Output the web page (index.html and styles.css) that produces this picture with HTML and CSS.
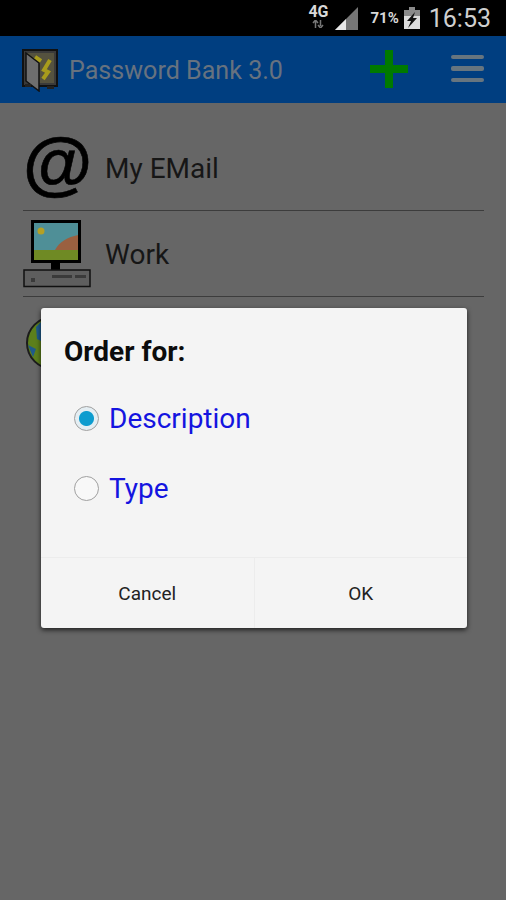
FILE: index.html
```html
<!DOCTYPE html>
<html lang="en">
<head>
  <meta charset="UTF-8">
  <meta name="viewport" content="width=device-width, initial-scale=1.0">
  <title>Password Bank 3.0</title>
  <link rel="stylesheet" href="styles.css">
</head>
<body>
  <div class="status-bar">
    <div class="net">
      <span class="net-label">4G</span>
      <svg class="net-arrows" width="12" height="8" viewBox="0 0 12 8">
        <path d="M3.500 8V2M1 3l2.500-3L6 3M8.500 0v6M6 5l2.500 3L11 5" fill="none" stroke="#777" stroke-width="1.500"/>
      </svg>
    </div>
    <svg class="signal" width="23" height="23" viewBox="0 0 23 23">
      <polygon points="0,23 23,0 23,23" fill="#767676"/>
      <polygon points="0,23 11,12 11,23" fill="#e8e8e8"/>
    </svg>
    <span class="battery-text">71%</span>
    <svg class="battery" width="16" height="22" viewBox="0 0 16 22">
      <rect x="5" y="0" width="6" height="3" fill="#8a8a8a"/>
      <rect x="0" y="3" width="16" height="19" fill="#dcdcdc"/>
      <rect x="0" y="3" width="16" height="6" fill="#8a8a8a"/>
      <polygon points="11,5 3,14 7,14 4,21 13,11 9,11" fill="#111"/>
    </svg>
    <span class="clock">16:53</span>
  </div>

  <header class="app-bar">
    <svg class="safe" width="38" height="44" viewBox="0 0 38 44">
      <rect x="2" y="2" width="34" height="36" fill="#3a3a3a" stroke="#111" stroke-width="2"/>
      <rect x="6" y="5" width="27" height="30" fill="#55523f"/>
      <path d="M14 9l6 4M29 12l-6 10 4 2-5 7" fill="none" stroke="#a89c1c" stroke-width="4"/>
      <polygon points="5,5 18,15 18,43 5,33" fill="#6e6e6e" stroke="#111" stroke-width="1.500"/>
      <rect x="4" y="36" width="6" height="3" fill="#222"/>
      <rect x="26" y="38" width="7" height="3" fill="#222"/>
    </svg>
    <span class="app-title">Password Bank 3.0</span>
    <svg class="add" width="38" height="38" viewBox="0 0 38 38">
      <rect x="0" y="15" width="38" height="8" fill="#007a00"/>
      <rect x="15" y="0" width="8" height="38" fill="#007a00"/>
    </svg>
    <div class="menu"><span></span><span></span><span></span></div>
  </header>

  <main class="list">
    <div class="row">
      <div class="row-icon"><span class="at">@</span></div>
      <span class="row-label">My EMail</span>
    </div>
    <div class="row">
      <div class="row-icon">
        <svg width="68" height="68" viewBox="0 0 68 68">
          <rect x="9.500" y="1.500" width="47" height="40" fill="#4f8f97" stroke="#000" stroke-width="3"/>
          <rect x="11" y="30" width="44" height="10" fill="#6f8a24"/>
          <path d="M32 30c4-8 13-13 23-15v15z" fill="#9a6040"/>
          <circle cx="18" cy="11" r="3.500" fill="#b5a024"/>
          <rect x="28" y="43" width="9" height="7" fill="#000"/>
          <rect x="1" y="50" width="66" height="16.500" fill="#5e5e5e" stroke="#111" stroke-width="1.500"/>
          <rect x="29" y="55" width="20" height="3" fill="#3a3a3a"/>
          <rect x="52" y="55" width="11" height="3" fill="#3a3a3a"/>
          <rect x="8" y="58" width="4" height="4" fill="#3a3a3a"/>
        </svg>
      </div>
      <span class="row-label">Work</span>
    </div>
    <div class="row">
      <div class="row-icon">
        <svg class="globe" width="68" height="60" viewBox="0 0 68 60">
          <circle cx="29" cy="30" r="26" fill="#5c7f1c" stroke="#1c1c1c" stroke-width="2"/>
          <path d="M12 14l9-9 14 3-8 12-6 10-8-4z" fill="#1f5a8a"/>
          <path d="M4 32l8 4-3 8z" fill="#1f5a8a"/>
        </svg>
      </div>
    </div>
  </main>

  <div class="dialog">
    <div class="dialog-title">Order for:</div>
    <div class="options">
      <div class="option"><span class="radio radio-on"></span><span class="option-label">Description</span></div>
      <div class="option"><span class="radio"></span><span class="option-label">Type</span></div>
    </div>
    <div class="dialog-buttons">
      <div class="dialog-btn">Cancel</div>
      <div class="dialog-btn">OK</div>
    </div>
  </div>
</body>
</html>
```

FILE: styles.css
```css
html, body {
  margin: 0;
  padding: 0;
}
body {
  position: relative;
  width: 506px;
  height: 900px;
  overflow: hidden;
  background: #666;
  font-family: Roboto, sans-serif;
}
.status-bar {
  height: 36px;
  background: #000;
  display: flex;
  align-items: center;
  justify-content: flex-end;
  color: #d8d8d8;
  padding-right: 15px;
}
.net {
  width: 20px;
  margin-right: 7px;
  display: flex;
  flex-direction: column;
  align-items: center;
  line-height: 1;
  margin-top: -4px;
}
.net-label {
  font-size: 16px;
  font-weight: 700;
  height: 15px;
}
.net-arrows {
  margin-top: 1px;
}
.signal {
  margin-right: 12px;
  margin-top: 1px;
}
.battery-text {
  font-size: 15px;
  font-weight: 700;
  margin-right: 5px;
}
.battery {
  margin-right: 9px;
  margin-top: -1px;
}
.clock {
  font-size: 25px;
  color: #cfcfcf;
}
.app-bar {
  height: 67px;
  background: #003e80;
  display: flex;
  align-items: center;
  padding-left: 21px;
}
.safe {
  margin-right: 10px;
}
.app-title {
  font-size: 25.100px;
  color: #67727f;
  width: 301px;
  padding-top: 2px;
}
.add {
  margin-right: 43px;
  margin-bottom: 2px;
}
.menu {
  width: 33px;
  display: flex;
  flex-direction: column;
  gap: 7px;
  margin-bottom: 2px;
}
.menu span {
  height: 4.500px;
  border-radius: 2px;
  background: #67757f;
}
.list {
  padding: 22px 22px 0 23px;
}
.row {
  display: flex;
  align-items: center;
  height: 86px;
  border-bottom: 1px solid #3c3c3c;
  box-sizing: border-box;
}
.row:last-child {
  border-bottom: none;
}
.row-icon {
  width: 82px;
  height: 78px;
  display: flex;
  align-items: center;
}
.at {
  font-family: "Liberation Sans", sans-serif;
  font-weight: 700;
  font-size: 71px;
  line-height: 78px;
  color: #000;
  margin: -10px 0 0 0;
  -webkit-text-stroke: 0.600px #000;
}
.globe {
  margin: 6px 0 0 1px;
}
.row-label {
  font-size: 28px;
  color: #161616;
  padding-top: 2px;
}
.dialog {
  position: absolute;
  left: 41px;
  top: 308px;
  width: 426px;
  height: 320px;
  background: #f4f4f4;
  border-radius: 3px;
  box-shadow: 0 2px 5px rgba(0, 0, 0, 0.7);
  display: flex;
  flex-direction: column;
}
.dialog-title {
  font-size: 28px;
  font-weight: 700;
  color: #0c0c0c;
  padding: 28px 0 0 23px;
  line-height: 32px;
}
.options {
  flex: 1;
  padding: 15px 0 0 33px;
}
.option {
  height: 70px;
  display: flex;
  align-items: center;
}
.radio {
  width: 25px;
  height: 25px;
  box-sizing: border-box;
  border: 1.500px solid #a0a0a0;
  border-radius: 50%;
  margin-right: 10px;
  background: #f8f8f8;
}
.radio-on {
  background: radial-gradient(circle, #0d9ccf 0, #0d9ccf 7px, #e4eef3 8px);
}
.option-label {
  font-size: 28px;
  color: #1414e0;
  padding-top: 1px;
}
.dialog-buttons {
  height: 70px;
  display: flex;
  border-top: 1px solid #ececec;
}
.dialog-btn {
  flex: 1;
  display: flex;
  align-items: center;
  justify-content: center;
  font-size: 19px;
  color: #222;
}
.dialog-btn + .dialog-btn {
  border-left: 1px solid #ececec;
}
```
